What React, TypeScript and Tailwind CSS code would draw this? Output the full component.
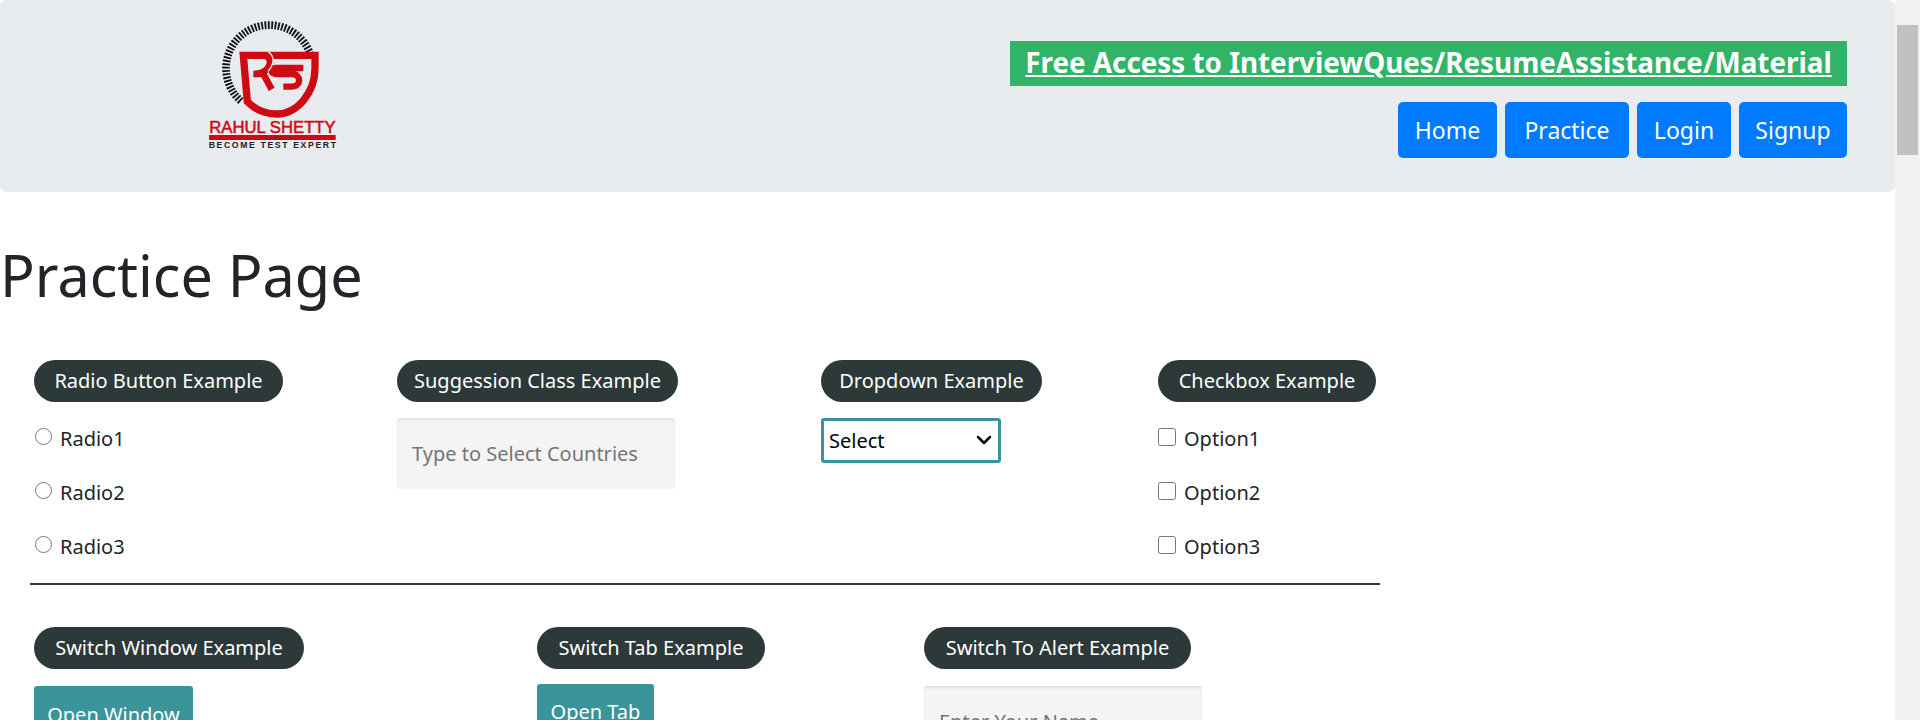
import { ChevronDown } from 'lucide-react';

const font = "font-['Noto_Sans',sans-serif]";

const navLinks = [
  { label: 'Home', width: 'w-[99px]' },
  { label: 'Practice', width: 'w-[124px]' },
  { label: 'Login', width: 'w-[94px]' },
  { label: 'Signup', width: 'w-[108px]' },
];

function Logo() {
  return (
    <svg viewBox="0 0 600 510" width={200} height={170} className="shrink-0">
      <path d="M182.5 303A130 130 0 1 1 390 160" fill="none" stroke="#111" strokeWidth={23} strokeDasharray="5.5 4.5" />
      <path d="M190 166H405V205C405 280 350 342 290 342C255 342 225 328 202 305Z" fill="#e8ebee" stroke="#cf0a12" strokeWidth={22} />
      <path d="M248 166C272 166 276 190 262 206C252 218 240 222 220 222H250L275 268" fill="none" stroke="#cf0a12" strokeWidth={20} />
      <path d="M370 204H290C270 204 270 222 290 222H335C365 222 365 260 335 260H310" fill="none" stroke="#cf0a12" strokeWidth={19} />
      <path d="M264 155C288 170 280 196 264 214" fill="none" stroke="#e8ebee" strokeWidth={4} />
      <text x={88} y={400} fontFamily="'Liberation Sans',sans-serif" fontSize={48} fill="#cf0a12" stroke="#cf0a12" strokeWidth={1.5} textLength={379} lengthAdjust="spacingAndGlyphs">RAHUL SHETTY</text>
      <rect x={87} y={405} width={380} height={15} fill="#cf0a12" />
      <text x={288} y={419} textAnchor="middle" fontFamily="'Liberation Sans',sans-serif" fontSize={14} fill="#7a1a1a" letterSpacing={4}>ACADEMY</text>
      <text x={86} y={443} fontFamily="'Liberation Sans',sans-serif" fontSize={26} fontWeight="bold" fill="#222" textLength={382} lengthAdjust="spacing">BECOME TEST EXPERT</text>
    </svg>
  );
}

function Pill({ children, width }: { children: string; width: string }) {
  return (
    <div className={`flex h-[42px] items-center justify-center rounded-[21px] bg-[#2d3838] text-[20px] text-white ${width}`}>
      {children}
    </div>
  );
}

function ChoiceList({ type, labels, boxClass }: { type: string; labels: string[]; boxClass: string }) {
  return (
    <div className="mt-[26px] flex flex-col gap-[33px]">
      {labels.map((label) => (
        <label key={label} className="flex h-[21px] items-center gap-[8px] text-[20px] leading-[21px] text-[#212529]">
          <input type={type} name={label} className={boxClass} />
          {label}
        </label>
      ))}
    </div>
  );
}

function TextBox({ placeholder }: { placeholder: string }) {
  return (
    <input
      placeholder={placeholder}
      className="h-[71px] w-[278px] rounded-[3px] bg-[#f4f4f4] px-[15px] text-[20px] shadow-[inset_0_2px_2px_rgba(0,0,0,0.08)] placeholder:text-[#757575]"
    />
  );
}

export default function App() {
  return (
    <div className={`flex h-screen overflow-hidden bg-white ${font}`}>
      <div className="min-w-0 flex-1">
        <header className="flex h-[192px] justify-between rounded-[6px] bg-[#e9ecef]">
          <div className="ml-[180px]">
            <Logo />
          </div>
          <div className="mr-[48px] flex flex-col items-end pt-[41px]">
            <a className="flex h-[45px] w-[837px] items-center justify-center bg-[#31b468] pb-[1px] text-[27.8px] font-bold text-white underline">
              Free Access to InterviewQues/ResumeAssistance/Material
            </a>
            <nav className="mt-[16px] flex gap-[8px]">
              {navLinks.map((link) => (
                <a key={link.label} className={`flex h-[56px] items-center justify-center rounded-[5px] bg-[#007bff] text-[23px] text-white ${link.width}`}>
                  {link.label}
                </a>
              ))}
            </nav>
          </div>
        </header>

        <h1 className="mt-[50px] text-[57.5px] leading-[67px] text-[#212529]">Practice Page</h1>

        <div className="mt-[51px] ml-[34px] flex">
          <section className="w-[363px]">
            <Pill width="w-[249px]">Radio Button Example</Pill>
            <ChoiceList type="radio" labels={['Radio1', 'Radio2', 'Radio3']} boxClass="mb-[4px] ml-[1px] h-[17px] w-[17px]" />
          </section>
          <section className="w-[424px]">
            <Pill width="w-[281px]">Suggession Class Example</Pill>
            <div className="mt-[16px]">
              <TextBox placeholder="Type to Select Countries" />
            </div>
          </section>
          <section className="w-[337px]">
            <Pill width="w-[221px]">Dropdown Example</Pill>
            <div className="relative mt-[16px] w-[180px]">
              <select className="h-[45px] w-full appearance-none rounded-[3px] border-[3px] border-[#3a9499] bg-white pl-[5px] text-[20px] text-black">
                <option>Select</option>
              </select>
              <ChevronDown className="pointer-events-none absolute top-[10px] right-[5px] h-[24px] w-[24px] text-black" strokeWidth={2.5} />
            </div>
          </section>
          <section>
            <Pill width="w-[218px]">Checkbox Example</Pill>
            <ChoiceList type="checkbox" labels={['Option1', 'Option2', 'Option3']} boxClass="mb-[4px] h-[18px] w-[18px]" />
          </section>
        </div>

        <hr className="mt-[26px] ml-[30px] w-[1350px] border-t-2 border-[#2d3838]" />

        <div className="mt-[42px] ml-[34px] flex">
          <section className="w-[503px]">
            <Pill width="w-[270px]">Switch Window Example</Pill>
            <button className="mt-[17px] h-[58px] w-[159px] rounded-[3px] bg-[#3a9499] text-[20px] text-white">Open Window</button>
          </section>
          <section className="w-[387px]">
            <Pill width="w-[228px]">Switch Tab Example</Pill>
            <button className="mt-[15px] h-[56px] w-[117px] rounded-[3px] bg-[#3a9499] text-[20px] text-white">Open Tab</button>
          </section>
          <section>
            <Pill width="w-[267px]">Switch To Alert Example</Pill>
            <div className="mt-[17px]">
              <TextBox placeholder="Enter Your Name" />
            </div>
          </section>
        </div>
      </div>

      <div className="flex w-[25px] shrink-0 flex-col bg-[#f1f1f1] pt-[25px] pl-[2px] pr-[2px]">
        <div className="h-[130px] bg-[#c1c1c1]" />
      </div>
    </div>
  );
}
